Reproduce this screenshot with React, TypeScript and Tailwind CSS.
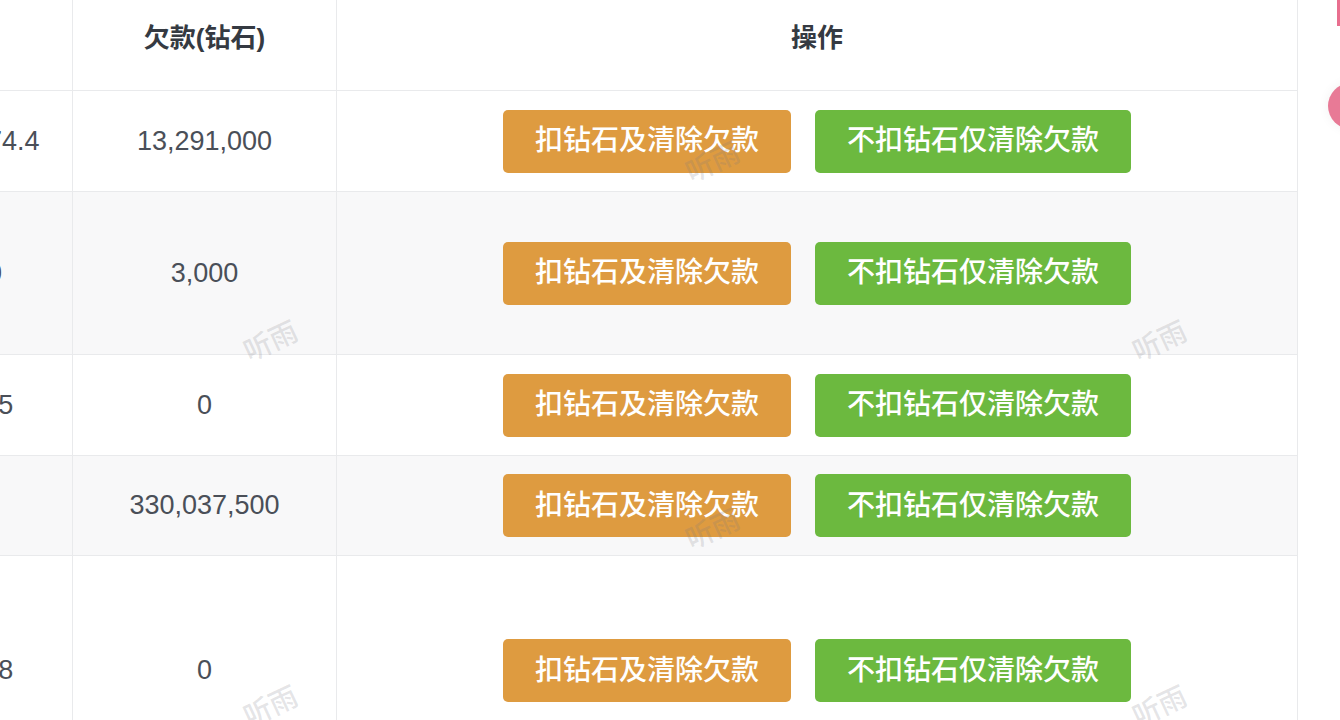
import React from "react";

type Row = {
  left: string;
  debt: string;
  height: string;
  striped: boolean;
};

const rows: Row[] = [
  { left: "421,574.4", debt: "13,291,000", height: "h-[101px]", striped: false },
  { left: "100", debt: "3,000", height: "h-[163px]", striped: true },
  { left: "1,205", debt: "0", height: "h-[101px]", striped: false },
  { left: "", debt: "330,037,500", height: "h-[100px]", striped: true },
  { left: "3,128", debt: "0", height: "h-[230px]", striped: false },
];

const marks = [
  { x: 271, y: 342 },
  { x: 1160, y: 342 },
  { x: 271, y: 707 },
  { x: 1160, y: 707 },
  { x: 713, y: 163 },
  { x: 713, y: 530 },
];

function ActionButtons() {
  return (
    <div className="flex items-center justify-center gap-6">
      <button className="h-[63px] px-8 rounded-[5px] bg-[#de9b40] text-white text-[28px] font-medium leading-none">
        扣钻石及清除欠款
      </button>
      <button className="h-[63px] px-8 rounded-[5px] bg-[#6cb93f] text-white text-[28px] font-medium leading-none">
        不扣钻石仅清除欠款
      </button>
    </div>
  );
}

export default function App() {
  return (
    <div
      className="relative w-[1340px] h-[720px] overflow-hidden bg-white text-[#4a4f58]"
      style={{ fontFamily: '"Liberation Sans", "Noto Sans CJK SC", sans-serif' }}
    >
      <div className="ml-[-113px] w-[1411px]">
        {/* header */}
        <div className="grid grid-cols-[186px_264px_961px] h-[91px] border-b border-[#e9eaec]">
          <div className="border-r border-[#e9eaec]" />
          <div className="border-r border-[#e9eaec] flex items-center justify-center pb-[14px] text-[26px] font-bold text-[#353a42]">
            欠款(钻石)
          </div>
          <div className="border-r border-[#e9eaec] flex items-center justify-center pb-[14px] text-[26px] font-bold text-[#353a42]">
            操作
          </div>
        </div>

        {rows.map((r, i) => (
          <div
            key={i}
            className={`grid grid-cols-[186px_264px_961px] border-b border-[#e9eaec] ${r.height} ${
              r.striped ? "bg-[#f8f8f9]" : "bg-white"
            }`}
          >
            <div className="border-r border-[#e9eaec] flex items-center justify-center text-[27px] whitespace-nowrap">
              {r.left}
            </div>
            <div className="border-r border-[#e9eaec] flex items-center justify-center text-[27px]">
              {r.debt}
            </div>
            <div className="border-r border-[#e9eaec] flex items-center justify-center">
              <ActionButtons />
            </div>
          </div>
        ))}
      </div>

      {/* floating side widgets */}
      <div className="absolute right-0 top-0 w-[3px] h-[26px] bg-[#e96f8f]" />
      <div className="absolute left-[1328px] top-[83px] w-[46px] h-[46px] rounded-full bg-[#e87a96] shadow-[0_0_12px_rgba(0,0,0,0.06)]" />

      {/* watermark */}
      {marks.map((m, i) => (
        <div
          key={i}
          className="absolute pointer-events-none text-[28px] font-medium text-[rgba(120,120,130,0.2)] -rotate-[25deg] whitespace-nowrap -translate-x-1/2 -translate-y-1/2"
          style={{ left: m.x, top: m.y }}
        >
          听雨
        </div>
      ))}
    </div>
  );
}
